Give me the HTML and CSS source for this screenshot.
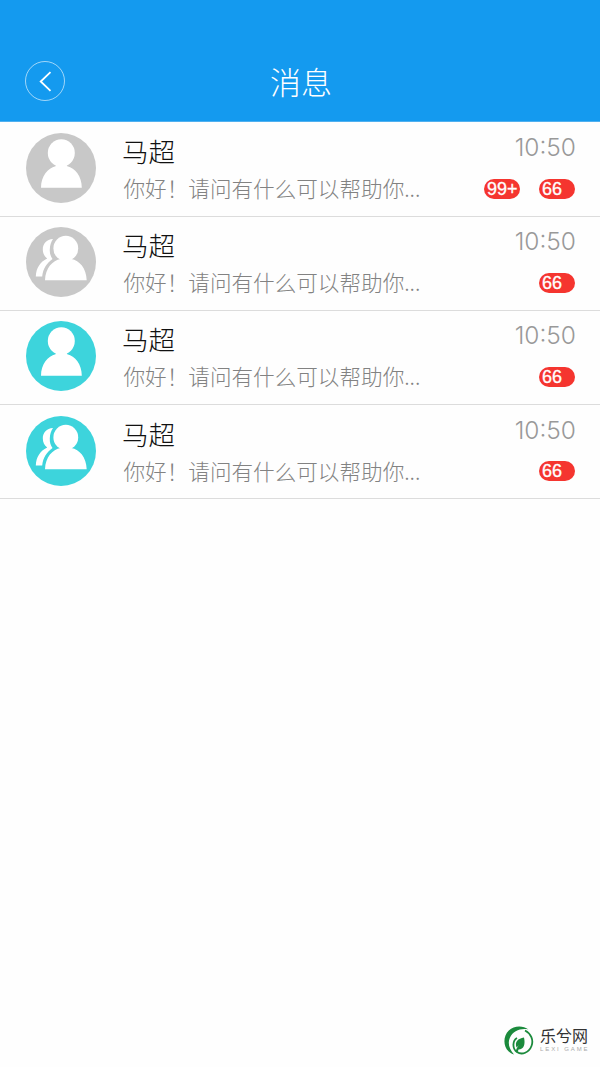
FILE: index.html
```html
<!DOCTYPE html>
<html lang="zh-CN">
<head>
  <meta charset="UTF-8">
  <title>消息</title>
  <link rel="stylesheet" href="styles.css">
</head>
<body>
  <!-- avatar icons, the colour comes from the avatar class -->
  <svg class="sprite" width="0" height="0">
    <symbol id="single" viewBox="0 0 70 70">
      <circle cx="35" cy="35" r="35" fill="currentColor"/>
      <ellipse cx="35.3" cy="20" rx="13.5" ry="13.7"/>
      <path d="M15 54.7C15 43 22 35 29.5 33.2L30.5 31H40L41.3 33.2C49 35 55.8 43 55.8 54.7Z"/>
    </symbol>
    <symbol id="group" viewBox="0 0 70 70">
      <circle cx="35" cy="35" r="35" fill="currentColor"/>
      <path d="M27 12C20.5 12.2 16.8 17 16.8 22.3C16.8 26.5 18.5 29.5 21.2 31.5C14 35 10.2 41 9.8 49.5H16.2C17 41.5 20.5 36.5 26.5 32C24.8 29.5 23.5 26.5 23.8 22.3C24 18 25 15 27 12Z"/>
      <ellipse cx="39.8" cy="21.4" rx="12.4" ry="12.6"/>
      <path d="M19 53.3C19.5 41 26.5 33.7 34.6 32.1L35.5 31H44L45.3 32.1C53.5 33.7 60.3 41 60.7 53.3Z"/>
    </symbol>
  </svg>

  <header class="header">
    <a class="back" href="#" aria-label="返回">
      <svg width="40" height="40" viewBox="0 0 40 40">
        <circle cx="20" cy="20" r="19.5"/>
        <path d="M25.5 11.2L15.7 20.5L25.5 29.8"/>
      </svg>
    </a>
    <h1>消息</h1>
  </header>

  <main class="list">
    <div class="item">
      <svg class="avatar gray"><use href="#single"/></svg>
      <div class="info">
        <div class="line"><span class="name">马超</span><span class="time">10:50</span></div>
        <div class="line">
          <span class="msg">你好！请问有什么可以帮助你...</span>
          <span class="badges"><span class="badge">99+</span><span class="badge">66</span></span>
        </div>
      </div>
    </div>
    <div class="item">
      <svg class="avatar gray"><use href="#group"/></svg>
      <div class="info">
        <div class="line"><span class="name">马超</span><span class="time">10:50</span></div>
        <div class="line">
          <span class="msg">你好！请问有什么可以帮助你...</span>
          <span class="badges"><span class="badge">66</span></span>
        </div>
      </div>
    </div>
    <div class="item">
      <svg class="avatar cyan"><use href="#single"/></svg>
      <div class="info">
        <div class="line"><span class="name">马超</span><span class="time">10:50</span></div>
        <div class="line">
          <span class="msg">你好！请问有什么可以帮助你...</span>
          <span class="badges"><span class="badge">66</span></span>
        </div>
      </div>
    </div>
    <div class="item">
      <svg class="avatar cyan"><use href="#group"/></svg>
      <div class="info">
        <div class="line"><span class="name">马超</span><span class="time">10:50</span></div>
        <div class="line">
          <span class="msg">你好！请问有什么可以帮助你...</span>
          <span class="badges"><span class="badge">66</span></span>
        </div>
      </div>
    </div>
  </main>

  <footer class="footer">
    <svg class="logo" width="30" height="30" viewBox="0 0 30 30">
      <path fill="#1b8a3c" d="M24.5 3.5C19 -.8 10 -.6 4.8 4.5C-1 10-1 20 4.500 25.300C6 26.900 8 28 10 28.600C5 23 3.600 17 5.800 12C8.800 5 17 1.800 24.500 3.500Z"/>
      <path fill="none" stroke="#1b8a3c" stroke-width="1.8" d="M21 4.500C27 7.500 29.800 14 27.500 20C25 26.500 18 29.500 13 26C8 22.500 8.500 14.500 13 12"/>
      <path fill="#1b8a3c" d="M20 11.500C21.500 18 20 23.500 14.500 23.500L13.500 26.500L11.500 26C12 23.500 13 21.500 15 19L12.500 21.500C10.500 15 14 13 20 11.500Z"/>
    </svg>
    <div class="brand">
      <span class="brand-name">乐兮网</span>
      <span class="brand-sub">LEXI GAME</span>
    </div>
  </footer>
</body>
</html>
```
FILE: styles.css
```css
* {
  box-sizing: border-box;
}
body {
  margin: 0;
  min-height: 1067px;
  display: flex;
  flex-direction: column;
  background: #fefefe;
  font-family: "Liberation Sans", "Noto Sans CJK SC", sans-serif;
  font-weight: 300;
}
.sprite {
  display: none;
}
.header {
  display: grid;
  grid-template-columns: 40px 1fr 40px;
  align-items: center;
  height: 122px;
  padding: 40px 25px 0;
  background: #149aef;
  border-bottom: 1px solid #50b0ef;
}
.header h1 {
  margin: 1px 0 0 2px;
  color: #fff;
  font-family: "Noto Sans CJK SC", sans-serif;
  font-size: 31px;
  font-weight: 300;
  line-height: 40px;
  text-align: center;
}
.back {
  height: 40px;
}
.back svg {
  display: block;
  fill: none;
  stroke: #fff;
}
.back circle {
  stroke-width: 1;
  opacity: 0.6;
}
.back path {
  stroke-width: 1.8;
}
.list {
  padding-top: 0.5px;
}
.item {
  display: flex;
  gap: 26px;
  height: 94.15px;
  padding: 10.7px 24px 0 26px;
  border-bottom: 1px solid #dcdcdc;
}
.avatar {
  flex: none;
  width: 70px;
  height: 70px;
  fill: #fff;
}
.gray {
  color: #c8c8c8;
}
.cyan {
  color: #3dd4dc;
}
.info {
  flex: 1;
}
.line {
  display: flex;
  justify-content: space-between;
  height: 37px;
}
.name {
  color: #111;
  font-family: "Noto Sans CJK SC", sans-serif;
  font-size: 26.5px;
  line-height: 36px;
}
.time {
  color: #999;
  font-family: Inter, sans-serif;
  font-size: 24.5px;
  line-height: 28px;
}
.msg {
  padding-left: 1.5px;
  color: #828282;
  font-family: "Noto Sans CJK SC", sans-serif;
  font-size: 21.6px;
  line-height: 36px;
  white-space: nowrap;
}
.badges {
  display: flex;
  gap: 19px;
  padding: 8.5px 1px 0 0;
}
.badge {
  width: 36px;
  height: 20px;
  padding-left: 3px;
  border-radius: 10px;
  background: #f5352f;
  color: #fff;
  font-family: "Liberation Sans", sans-serif;
  font-size: 18px;
  font-weight: 400;
  line-height: 20px;
  -webkit-text-stroke: 0.3px #fff;
}
.footer {
  display: flex;
  gap: 6px;
  margin-top: auto;
  padding: 0 11px 11px 504px;
}
.logo {
  flex: none;
}
.brand {
  display: flex;
  flex-direction: column;
  white-space: nowrap;
}
.brand-name {
  color: #333;
  font-family: "Noto Sans CJK SC", sans-serif;
  font-size: 16px;
  font-weight: 400;
  line-height: 18px;
}
.brand-sub {
  color: #aaa;
  font-size: 6px;
  letter-spacing: 1.9px;
  line-height: 11px;
}
```
